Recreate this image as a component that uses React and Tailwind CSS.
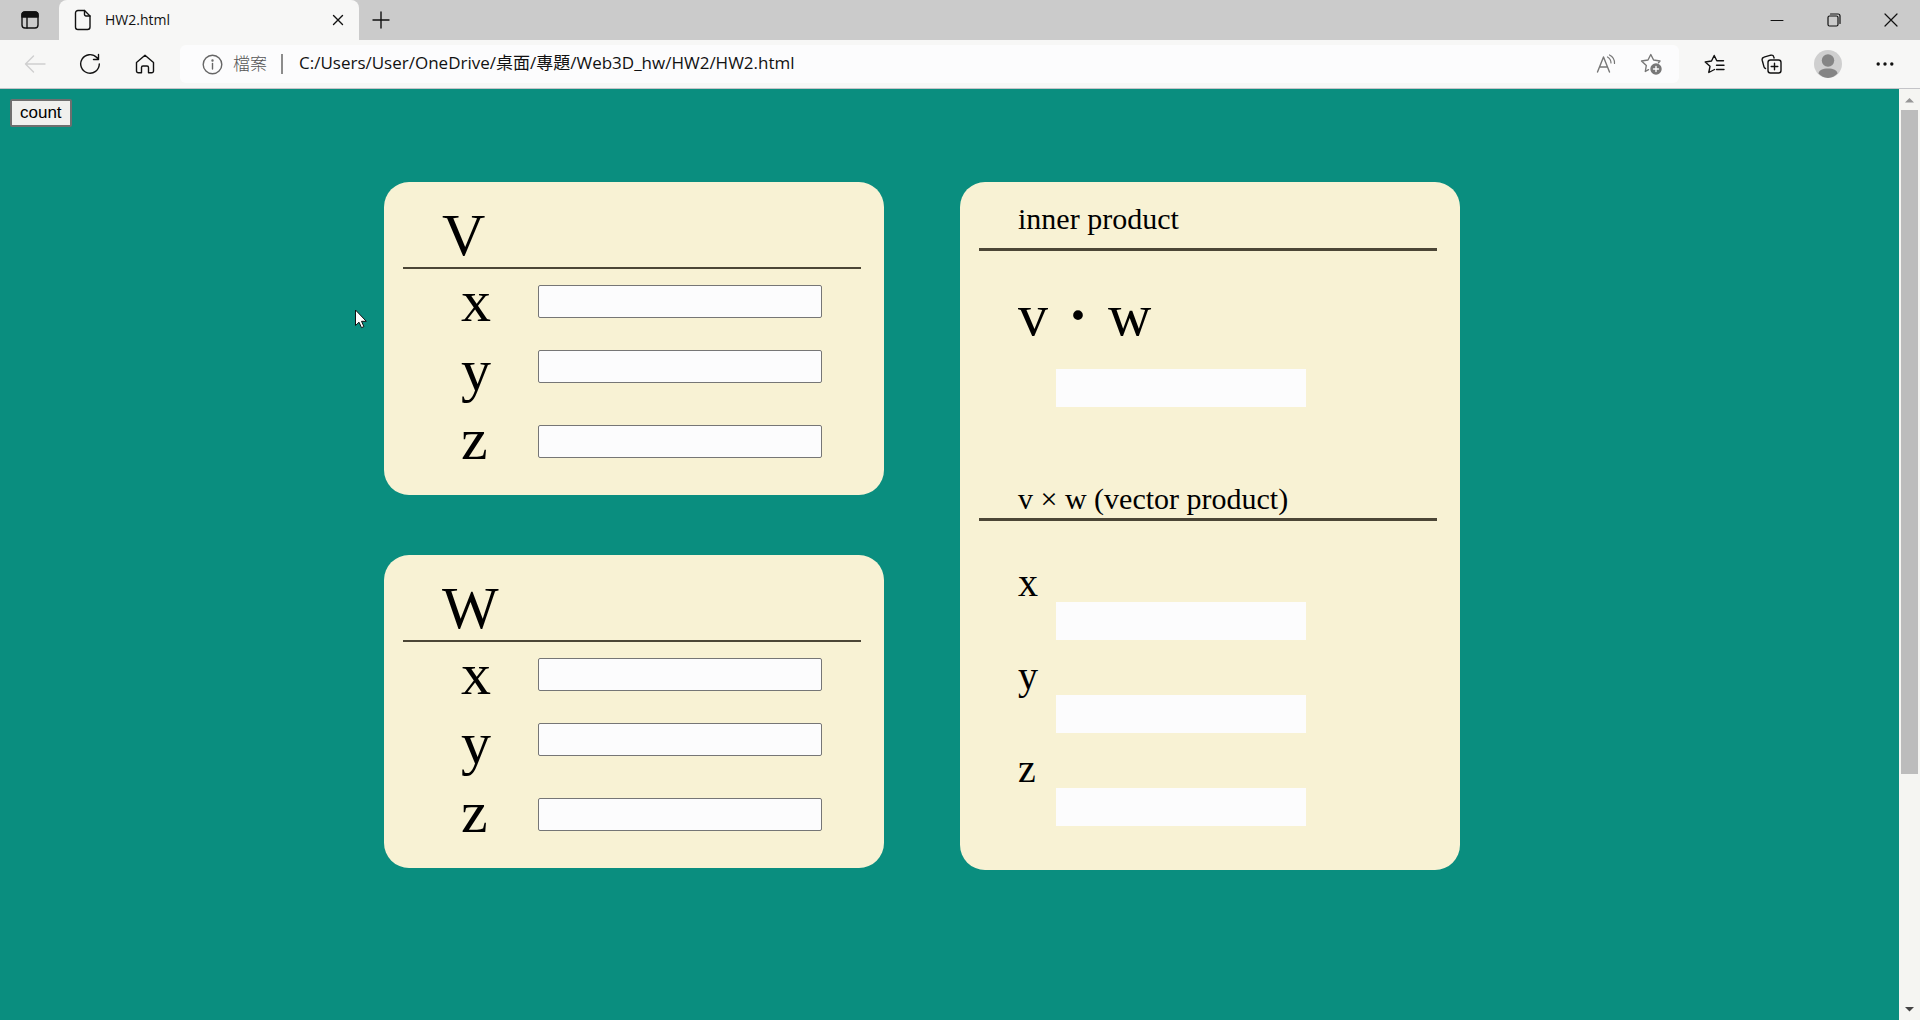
import React from "react";

const stroke = {
  fill: "none",
  stroke: "currentColor",
  strokeWidth: 1.4,
  strokeLinecap: "round",
  strokeLinejoin: "round",
};

function Icon({ w = 20, h = 20, children }) {
  return (
    <svg width={w} height={h} viewBox={`0 0 ${w} ${h}`} {...stroke} aria-hidden="true">
      {children}
    </svg>
  );
}

function IconButton({ label, className = "w-10", children }) {
  return (
    <button type="button" aria-label={label} className={`flex h-9 shrink-0 items-center justify-center ${className}`}>
      {children}
    </button>
  );
}

function TabStrip() {
  return (
    <div className="flex h-10 items-stretch bg-[#cbcbcb] text-[#111]">
      <div className="flex w-[59px] items-center justify-center">
        <IconButton label="Tab actions">
          <Icon>
            <rect x="2" y="2" width="16" height="16" rx="3" />
            <path d="M2 7V5a3 3 0 0 1 3-3h10a3 3 0 0 1 3 3v2z" fill="currentColor" />
            <path d="M7 7v11" />
          </Icon>
        </IconButton>
      </div>
      <div className="flex w-[300px] items-center rounded-t-lg bg-[#f7f7f6] pl-3.5 pr-2">
        <Icon w={20} h={22}>
          <path d="M5 1.500h6.500L17 7v11a2.500 2.500 0 0 1-2.500 2.500H5A2.500 2.500 0 0 1 2.500 18V4A2.500 2.500 0 0 1 5 1.500z" />
          <path d="M11.500 1.500V5.500A1.500 1.500 0 0 0 13 7h4" />
        </Icon>
        <span className="ml-3 flex-1 text-[14px] leading-[20px]">HW2.html</span>
        <IconButton label="Close tab" className="w-[26px]">
          <Icon w={12} h={12}>
            <path d="M1.500 1.500l9 9M10.500 1.500l-9 9" />
          </Icon>
        </IconButton>
      </div>
      <div className="flex flex-1 items-center">
        <IconButton label="New tab" className="w-[43px]">
          <Icon w={18} h={18}>
            <path d="M9 1v16M1 9h16" />
          </Icon>
        </IconButton>
      </div>
      <div className="flex items-center pr-px">
        <IconButton label="Minimize" className="w-[57px]">
          <Icon w={14} h={14}>
            <path d="M1 7.500h12" strokeWidth="1" />
          </Icon>
        </IconButton>
        <IconButton label="Restore" className="w-[57px]">
          <Icon w={14} h={14}>
            <rect x="1" y="3" width="10" height="10" rx="1.500" strokeWidth="1.200" />
            <path d="M3.500 1H11a2 2 0 0 1 2 2v7.500" strokeWidth="1.200" />
          </Icon>
        </IconButton>
        <IconButton label="Close" className="w-[57px]">
          <Icon w={14} h={14}>
            <path d="M1 1l12 12M13 1L1 13" strokeWidth="1.200" />
          </Icon>
        </IconButton>
      </div>
    </div>
  );
}

function AddressBar() {
  return (
    <div className="flex h-[38px] min-w-0 flex-1 items-center rounded-md bg-[#fcfcfd] pl-[22px] pr-2.5">
      <span className="text-[#666]">
        <Icon w={21} h={21}>
          <circle cx="10.500" cy="10.500" r="9.300" />
          <path d="M10.500 9.500v5.500" />
          <circle cx="10.500" cy="6.500" r="0.500" fill="currentColor" />
        </Icon>
      </span>
      <span className="ml-2.5 text-[17px] font-light text-[#555]">檔案</span>
      <span className="ml-3.5 h-5 w-0.5 bg-[#8c8c8c]" />
      <input
        type="text"
        aria-label="Address"
        defaultValue="C:/Users/User/OneDrive/桌面/專題/Web3D_hw/HW2/HW2.html"
        className="ml-4 min-w-0 flex-1 bg-transparent pb-0.5 text-[17px] leading-[24px] text-[#111] outline-none"
      />
      <div className="flex gap-[9px] text-[#777]">
        <IconButton label="Read aloud" className="w-9">
          <Icon>
            <path d="M1.500 18L7.500 3 13.500 18M3.700 13h7.600" />
            <path d="M11.500 3a7 7 0 0 1 3.500 6M13.500 1a9 9 0 0 1 5 8.500" strokeWidth="1.200" />
          </Icon>
        </IconButton>
        <IconButton label="Add to favorites" className="w-9">
          <Icon w={22} h={22}>
            <path d="M8.500 16.700L5.300 18.500 6.300 12.500 1.500 8 8 7 10.800 1.500 13.600 7 20 8 18.500 9.700" />
            <circle cx="16" cy="16" r="5" fill="currentColor" />
            <path d="M16 13.500v5M13.500 16h5" stroke="#fcfcfd" />
          </Icon>
        </IconButton>
      </div>
    </div>
  );
}

function Toolbar() {
  return (
    <div className="flex h-[49px] items-center gap-[15px] border-b border-[#c4c4c8] bg-[#f7f7f6] px-[15px] text-[#111]">
      <IconButton label="Back">
        <span className="text-[#cfcfcf]">
          <Icon w={22} h={20}>
            <path d="M21 10H1.500M9.500 2l-8 8 8 8" />
          </Icon>
        </span>
      </IconButton>
      <IconButton label="Refresh">
        <Icon w={22} h={22}>
          <path d="M20.300 11a9.300 9.300 0 1 1-2.500-6.400L19.500 6.500M19.500 1.500v5h-5" />
        </Icon>
      </IconButton>
      <IconButton label="Home">
        <Icon w={20} h={20}>
          <path d="M1.500 8.500L10 1.200l8.500 7.300V17a1.800 1.800 0 0 1-1.800 1.800H13.500V13.500A1.500 1.500 0 0 0 12 12H8a1.500 1.500 0 0 0-1.500 1.500v5.300H3.300A1.800 1.800 0 0 1 1.500 17z" />
        </Icon>
      </IconButton>
      <AddressBar />
      <div className="flex gap-[17px]">
        <IconButton label="Favorites">
          <Icon w={21} h={20}>
            <path d="M10.500 15.500L4.800 18.500 6 12.300 1.200 8 7.500 7 10.200 1.500 12.800 6.800H19.500M12.500 11.200h7.500M12.500 15.500h7.500" />
          </Icon>
        </IconButton>
        <IconButton label="Collections">
          <Icon w={21} h={20}>
            <path d="M4.500 14.500A2.500 2.500 0 0 1 3 12.800L1.200 6.200A2.500 2.500 0 0 1 3 3.200L9.800 1.200a2.500 2.500 0 0 1 3 1.800l.3 1" />
            <rect x="7" y="6" width="13" height="13" rx="2.500" />
            <path d="M13.500 9.200v6.600M10.200 12.500h6.600" />
          </Icon>
        </IconButton>
        <IconButton label="Profile">
          <svg width="28" height="28" viewBox="0 0 28 28" aria-hidden="true">
            <circle cx="14" cy="14" r="14" fill="#cfcfcf" />
            <circle cx="14" cy="10.500" r="6.200" fill="#858585" />
            <path d="M4.500 23.500C5 20 8.500 18.500 14 18.500s9 1.500 9.500 5A14 14 0 0 1 14 28a14 14 0 0 1-9.500-4.500z" fill="#858585" />
          </svg>
        </IconButton>
        <IconButton label="Settings and more">
          <svg width="18" height="4" viewBox="0 0 18 4" fill="currentColor" aria-hidden="true">
            <circle cx="2.200" cy="2" r="1.700" />
            <circle cx="9" cy="2" r="1.700" />
            <circle cx="15.800" cy="2" r="1.700" />
          </svg>
        </IconButton>
      </div>
    </div>
  );
}

const FIELD = "h-[33px] w-[284px] rounded-xs border border-[#767676] bg-[#fcfcfd] px-2 text-[17px]";

function VectorCard({ name }) {
  const id = (axis) => `${name}-${axis}`;
  return (
    <section className="rounded-[25px] bg-[#f8f2d4] pb-[26px] pl-[19px] pr-[23px] pt-[22px]">
      <h2 className="border-b-2 border-[#4c4636] pl-[39px] text-[60px] leading-[63px]">{name}</h2>
      <div className="flex">
        <div className="mt-0.5 flex w-[135px] flex-col gap-[9px] pl-[58px] text-[60px] leading-[60px]">
          <label htmlFor={id("x")}>x</label>
          <label htmlFor={id("y")}>y</label>
          <label htmlFor={id("z")}>z</label>
        </div>
        <div className="flex flex-col gap-8 pt-4">
          <input id={id("x")} type="text" className={FIELD} />
          <input id={id("y")} type="text" className={FIELD} />
          <input id={id("z")} type="text" className={`mt-2.5 ${FIELD}`} />
        </div>
      </div>
    </section>
  );
}

const RESULT = "ml-[77px] block h-[38px] w-[250px] bg-[#fcfcfd]";

function ResultCard() {
  return (
    <section className="w-[500px] rounded-[25px] bg-[#f8f2d4] pb-11 pl-[19px] pr-[23px] pt-[19px]">
      <h2 className="border-b-3 border-[#4c4636] pb-[11px] pl-[39px] text-[30px] leading-[36px]">inner product</h2>
      <p className="mt-[34px] flex pl-[39px] text-[60px] leading-[60px]">
        <span>v</span>
        <span className="w-[60px] text-center font-bold">·</span>
        <span>w</span>
      </p>
      <output aria-label="inner product" className={`mt-6 ${RESULT}`} />
      <h2 className="mt-[74px] border-b-3 border-[#4c4636] pb-px pl-[39px] text-[30px] leading-[36px]">
        v × w (vector product)
      </h2>
      <div className="mt-[43px] flex flex-col gap-[17px]">
        {["x", "y", "z"].map((axis) => (
          <div key={axis}>
            <label htmlFor={`cross-${axis}`} className="block pl-[39px] text-[40px] leading-[38px]">
              {axis}
            </label>
            <output id={`cross-${axis}`} className={RESULT} />
          </div>
        ))}
      </div>
    </section>
  );
}

function Scrollbar() {
  return (
    <div className="flex w-[21px] shrink-0 flex-col items-center bg-[#f5f5f2]" aria-hidden="true">
      <svg width="21" height="21" viewBox="0 0 21 21">
        <path d="M6 13.500L10.500 9 15 13.500z" fill="#969696" />
      </svg>
      <div className="w-[17px] flex-[664] bg-[#bcbcbc]" />
      <div className="flex-[225]" />
      <svg width="21" height="21" viewBox="0 0 21 21">
        <path d="M6 8L10.500 12.500 15 8z" fill="#444" />
      </svg>
    </div>
  );
}

function Pointer() {
  return (
    <svg className="pointer-events-none absolute left-[354px] top-[220px]" width="14" height="20" viewBox="0 0 14 20" aria-hidden="true">
      <path d="M1.500 1v15.500l3.500-3.300 2.500 5.500 2.400-1.100L7.500 12.300h4.800z" fill="#fff" stroke="#111" strokeWidth="1" />
    </svg>
  );
}

export default function App() {
  return (
    <div className="flex min-h-screen flex-col font-['Open_Sans','Noto_Sans_CJK_TC',sans-serif]">
      <header>
        <TabStrip />
        <Toolbar />
      </header>
      <div className="flex flex-1">
        <main className="relative min-w-0 flex-1 bg-[#0a8e7f] font-['Liberation_Serif',serif] text-black">
          <div className="flex p-2.5">
            <button
              type="button"
              className="h-7 rounded-xs border-2 border-[#6f6f6f] bg-[#f0f0ee] px-2 font-['Liberation_Sans',sans-serif] text-[17px] leading-[20px]"
            >
              count
            </button>
          </div>
          <div className="flex items-start gap-[76px] pb-10 pl-96 pt-[45px]">
            <div className="flex w-[500px] flex-col gap-[60px]">
              <VectorCard name="V" />
              <VectorCard name="W" />
            </div>
            <ResultCard />
          </div>
          <Pointer />
        </main>
        <Scrollbar />
      </div>
    </div>
  );
}
